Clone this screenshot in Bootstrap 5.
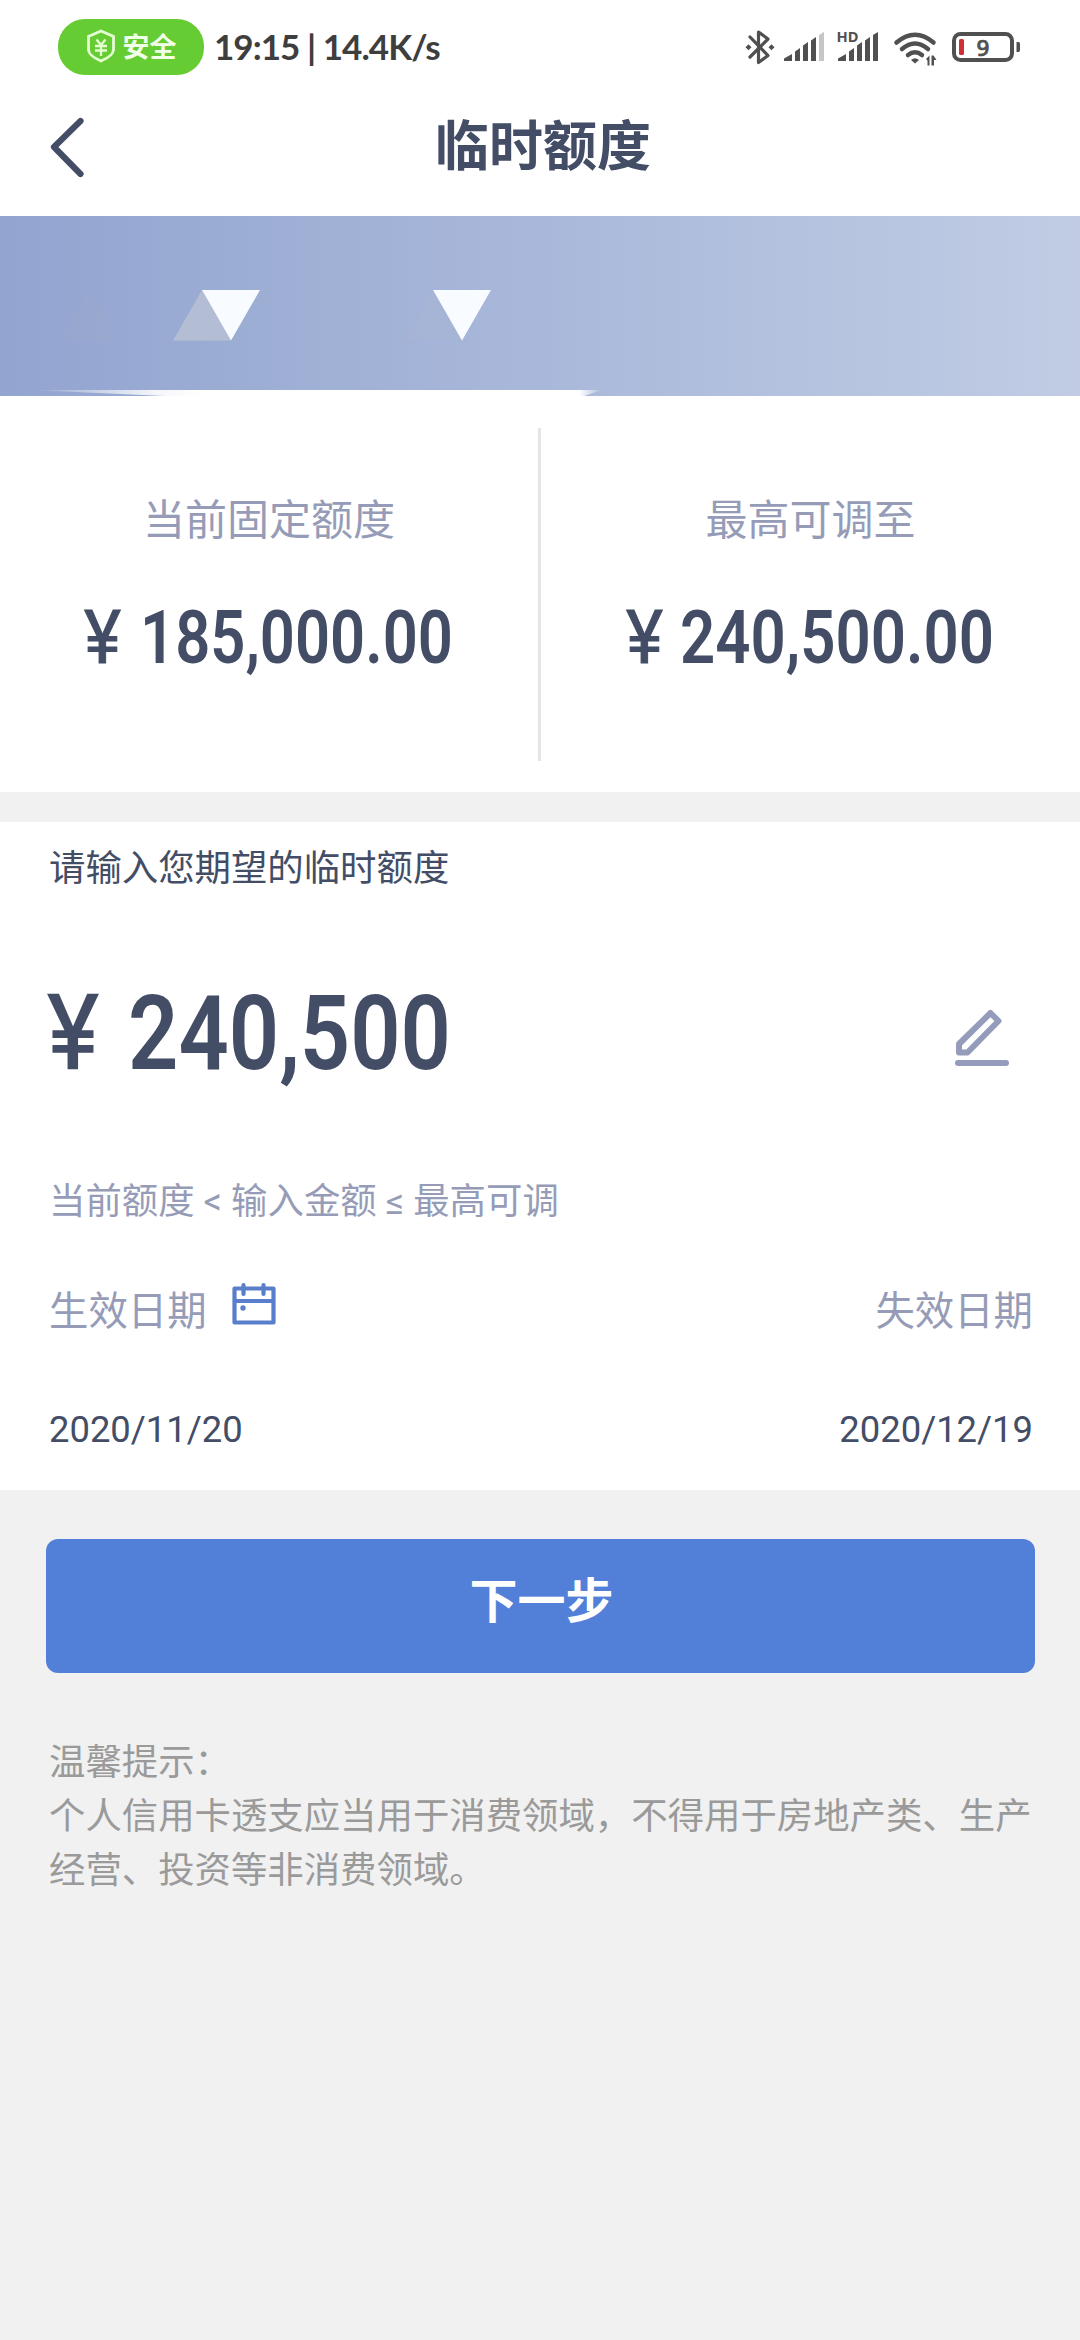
<!DOCTYPE html>
<html lang="zh-CN">
<head>
<meta charset="utf-8">
<meta name="viewport" content="width=device-width, initial-scale=1">
<title>临时额度</title>
<link href="https://cdn.jsdelivr.net/npm/bootstrap@5.3.0/dist/css/bootstrap.min.css" rel="stylesheet">
<style>
body{background:#f1f1f1;color:#434d66;font-family:Roboto,"Noto Sans CJK SC",sans-serif;font-size:36.4px;line-height:54px}
svg{display:block;flex:none}
.statusbar{height:94px;padding:0 58px;color:#3e3e3e}
.safe-pill{width:146px;height:56px;margin-top:19px;background:#6c3;color:#f2ffe9;font-size:27px;line-height:58px;border-radius:27px}
.clock{font-family:Lato,sans-serif;font-weight:700;font-size:35px;letter-spacing:-.95px;line-height:56px;margin:18px 0 0 10px}
.titlebar{height:123px;padding-left:46px;padding-right:46px}
.page-title{font-size:54px;line-height:60px;font-weight:700;margin:0}
.banner{margin-top:-1px}
.limits{height:396px}
.limit-rule{width:3px;height:333px;margin-top:32px;background:#e5e5e5}
.limit-name{font-size:42px;line-height:60px;color:#969cb7;margin-top:95px}
.muted{color:#969cb7}
.form-area{height:668px;margin-top:30px;padding:0 47px 0 49px}
.money{font-family:Roboto,sans-serif;font-weight:600;fill:#434d66;overflow:visible}
.yen{font-weight:400;stroke:#434d66;stroke-width:1px}
.date-name{font-size:39.4px}
.btn-next{height:134px;border:0;border-radius:12px;background:#5280d8;font-size:48px;font-weight:700;line-height:1;padding:0 10px 8px 12px}
.tips{color:#9a9a9a;margin:63px 0 0 49px}
</style>
</head>
<body>
<div class="bg-white">
  <div class="statusbar d-flex">
    <div class="safe-pill d-flex justify-content-center fw-bold">
      <svg width="30" height="34" viewBox="0 0 30 34" fill="none" stroke="#e4ffd2" stroke-width="2.8" style="margin:10px 7px 0 0"><path d="M15 2 27.5 7.500V21Q27 27 15 32Q3 27 2.500 21V7.500Z"/><path d="M10.500 10.500 15 16 19.500 10.500M15 16V27M9 17H21M9 21.500H21" stroke-width="2.300"/></svg>安全</div>
    <div class="clock text-nowrap">19:15 | 14.4K/s</div>
    <svg class="ms-auto" width="278" height="46" viewBox="744 22 278 46" fill="#505050" style="margin-top:22px">
      <path d="M750 37 768 55.500 758.500 62.500V32L768 39 750 57" fill="none" stroke="#505050" stroke-width="3.200" stroke-linejoin="round" stroke-linecap="round"/>
      <path d="M745.500 47.300l3-3 3 3-3 3zM768.500 47.300l3-3 3 3-3 3z"/>
      <g id="bars"><path d="M784 61V58.500L792 54V61ZM795 61V51.500L800 48V61ZM803 61V45.500L808 42V61ZM811 61V40.500L816 37V61Z"/></g>
      <path d="M819 61V35L824 32V61Z" fill="#c6c6c6"/>
      <use href="#bars" x="54"/><path d="M873 61V35L878 32V61Z"/>
      <text x="836.500" y="42" font-family="Noto Sans,sans-serif" font-weight="700" font-size="14.800" textLength="22" lengthAdjust="spacingAndGlyphs">HD</text>
      <g fill="none" stroke="#505050" stroke-width="4.500" stroke-linecap="round"><path d="M896.500 42.500Q915 27 933.500 42.500M902 49Q915 38 928 49M908 55Q915 49.500 922 55"/></g>
      <path d="M911 60Q915 56.500 919 60L915 63.500Z"/>
      <path d="M926 59 929.500 55.500V65.500H927.500V60.500ZM931.500 55.500H933.500L936.500 60H934V65.500H931.500Z"/>
      <rect x="954" y="34" width="58" height="26" rx="6.500" fill="none" stroke="#505050" stroke-width="4"/>
      <path d="M1016.500 42h2q1.500 0 1.500 2v6q0 2-1.500 2h-2z"/>
      <rect x="959" y="39" width="5" height="16" rx="1.500" fill="#cf3038"/>
      <text x="983" y="55.500" text-anchor="middle" font-family="Noto Sans,sans-serif" font-weight="500" font-size="22.500" stroke="#505050" stroke-width=".7">9</text>
    </svg>
  </div>
  <header class="titlebar d-flex align-items-start justify-content-between">
    <svg width="44" height="70" viewBox="0 0 44 70" fill="none" stroke="#434d66" stroke-width="6.200" stroke-linecap="round" stroke-linejoin="round" style="margin-top:18px"><path d="M34.500 9 8 35 34.500 62"/></svg>
    <h1 class="page-title" style="margin-top:24px">临时额度</h1>
    <span style="width:38px"></span>
  </header>
  <svg class="banner" width="1080" height="180" viewBox="0 0 1080 180">
    <defs>
      <linearGradient id="sky" x1="0" y1="0" x2="1" y2="0"><stop offset="0" stop-color="#92a4d0"/><stop offset=".22" stop-color="#9cadd4"/><stop offset=".5" stop-color="#a9b8da"/><stop offset=".78" stop-color="#b6c4e0"/><stop offset="1" stop-color="#c1cce4"/></linearGradient>
      <linearGradient id="edge"><stop offset="0" stop-color="#fff" stop-opacity="0"/><stop offset=".22" stop-color="#fff" stop-opacity=".9"/><stop offset=".3" stop-color="#fff"/><stop offset=".96" stop-color="#fff"/><stop offset="1" stop-color="#fff" stop-opacity="0"/></linearGradient>
    </defs>
    <path d="M0 0H1080V180H0Z" fill="url(#sky)"/>
    <path d="M60 124 89 74 118 124Z" fill="#9fa9c8" opacity=".25"/>
    <path d="M173 124.500 202 74 231 124.500Z" fill="#b3bdd3"/>
    <path d="M404 124.500 433 74 462 124.500Z" fill="#a6b4d5" opacity=".7"/>
    <path d="M202 74H260L231 124.500ZM433 74H491L462 124.500Z" fill="#f8fbff"/>
    <path d="M30 174H602L584 180H165Z" fill="url(#edge)"/>
  </svg>
  <section class="limits d-flex">
    <div class="col d-flex flex-column align-items-center">
      <div class="limit-name">当前固定额度</div>
      <svg class="money" width="538" height="110" viewBox="0 585 538 110" font-size="74" style="margin-top:34px"><text class="yen" x="84" y="663" textLength="37" lengthAdjust="spacingAndGlyphs">¥</text><text x="140" y="663" textLength="313" lengthAdjust="spacingAndGlyphs">185,000.00</text></svg>
    </div>
    <div class="limit-rule"></div>
    <div class="col d-flex flex-column align-items-center">
      <div class="limit-name">最高可调至</div>
      <svg class="money" width="539" height="110" viewBox="541 585 539 110" font-size="74" style="margin-top:34px"><text class="yen" x="626" y="663" textLength="37" lengthAdjust="spacingAndGlyphs">¥</text><text x="680" y="663" textLength="314" lengthAdjust="spacingAndGlyphs">240,500.00</text></svg>
    </div>
  </section>
</div>
<section class="form-area bg-white d-flex flex-column">
  <div style="margin-top:20px">请输入您期望的临时额度</div>
  <div class="d-flex justify-content-between" style="margin-top:64px">
    <svg class="money" width="430" height="150" viewBox="44 960 430 150" font-size="104" style="margin-left:-5px"><text class="yen" x="47.500" y="1067.500" textLength="51" lengthAdjust="spacingAndGlyphs" style="stroke-width:1.500px">¥</text><text x="128" y="1068.500" textLength="323" lengthAdjust="spacingAndGlyphs">240,500</text></svg>
    <svg width="62" height="62" viewBox="950 1006 62 62" fill="none" stroke="#959bbb" stroke-width="6" stroke-linejoin="round" stroke-linecap="round" style="margin:46px 20px 0 0"><path d="M989.500 1013 997.500 1021 966.500 1052.500H958V1044Z"/><path d="M957 1063H1005"/></svg>
  </div>
  <div class="muted text-nowrap" style="margin-top:65px">当前额度 &lt; 输入金额 ≤ 最高可调</div>
  <div class="d-flex justify-content-between muted date-name" style="margin-top:56px">
    <div class="d-flex">生效日期
      <svg width="46" height="44" viewBox="0 0 46 44" fill="none" stroke="#5a7fca" stroke-width="4.200" stroke-linejoin="round" stroke-linecap="round" style="margin:-3px 0 0 24px"><path d="M3.500 6.500H42.500V40.500H3.500ZM3.500 19H42.500M12.500 3V12M32.500 3V12"/><circle cx="12" cy="26" r="2.700" fill="#5a7fca" stroke="none"/></svg>
    </div>
    <div>失效日期</div>
  </div>
  <div class="d-flex justify-content-between" style="margin-top:64px"><span>2020/11/20</span><span>2020/12/19</span></div>
</section>
<div style="padding:49px 45px 0 46px"><button class="btn btn-primary btn-next w-100 d-block">下一步</button></div>
<div class="tips text-nowrap">温馨提示：<br>个人信用卡透支应当用于消费领域，不得用于房地产类、生产<br>经营、投资等非消费领域。</div>
<script src="https://cdn.jsdelivr.net/npm/bootstrap@5.3.0/dist/js/bootstrap.bundle.min.js"></script>
</body>
</html>
